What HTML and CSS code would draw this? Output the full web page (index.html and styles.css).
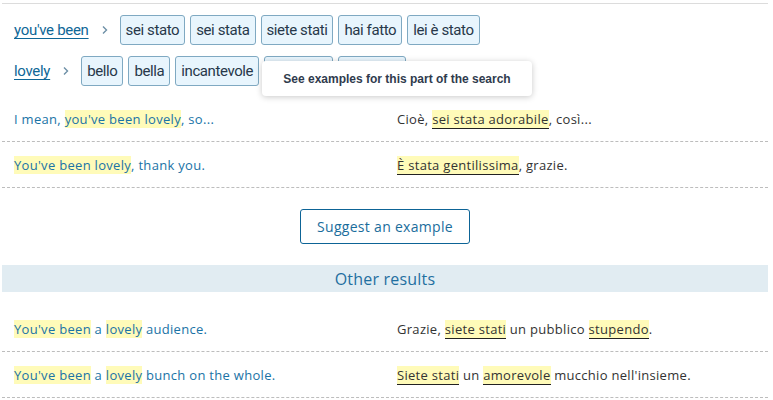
FILE: index.html
```html
<!DOCTYPE html>
<html>
<head>
<meta charset="utf-8">
<link rel="stylesheet" href="styles.css">
</head>
<body>
<div class="page">
  <div class="trans">
    <div class="trow">
      <a class="src" href="#">you've been</a>
      <span class="chev"><svg width="8" height="10" viewBox="0 0 8 10"><path d="M2 1.5 L5.5 5 L2 8.5" fill="none" stroke="#6d8fa6" stroke-width="1.4"/></svg></span>
      <span class="chip">sei stato</span>
      <span class="chip">sei stata</span>
      <span class="chip">siete stati</span>
      <span class="chip">hai fatto</span>
      <span class="chip">lei è stato</span>
    </div>
    <div class="trow">
      <a class="src" href="#">lovely</a>
      <span class="chev"><svg width="8" height="10" viewBox="0 0 8 10"><path d="M2 1.5 L5.5 5 L2 8.5" fill="none" stroke="#6d8fa6" stroke-width="1.4"/></svg></span>
      <span class="chip">bello</span>
      <span class="chip">bella</span>
      <span class="chip">incantevole</span>
      <span class="chip hidden4"></span>
      <span class="chip hidden5"></span>
      <div class="tooltip">See examples for this part of the search</div>
    </div>
  </div>

  <div class="ex">
    <div class="exsrc">I mean, <em class="hl">you've been lovely</em>, so...</div>
    <div class="extgt">Cioè, <em class="hl">sei stata adorabile</em>, così...</div>
  </div>
  <div class="ex">
    <div class="exsrc"><em class="hl">You've been lovely</em>, thank you.</div>
    <div class="extgt"><em class="hl">È stata gentilissima</em>, grazie.</div>
  </div>

  <div class="suggest">
    <button class="btn">Suggest an example</button>
  </div>

  <div class="other">Other results</div>

  <div class="ex first">
    <div class="exsrc"><em class="hl">You've been</em> a <em class="hl">lovely</em> audience.</div>
    <div class="extgt">Grazie, <em class="hl">siete stati</em> un pubblico <em class="hl">stupendo</em>.</div>
  </div>
  <div class="ex">
    <div class="exsrc"><em class="hl">You've been</em> a <em class="hl">lovely</em> bunch on the whole.</div>
    <div class="extgt"><em class="hl">Siete stati</em> un <em class="hl">amorevole</em> mucchio nell'insieme.</div>
  </div>
</div>
</body>
</html>
```

FILE: styles.css
```css
html, body {
  margin: 0;
  padding: 0;
  background: #fff;
}
.page {
  width: 766px;
  margin-left: 2px;
  margin-top: 3px;
  border-top: 1px solid #dcdcdc;
  font-family: "Open Sans", sans-serif;
}
.trans {
  padding: 11px 0 10px 12px;
  display: flex;
  flex-direction: column;
  gap: 11px;
}
.trow {
  position: relative;
  display: flex;
  align-items: center;
  height: 30px;
}
.src {
  font-family: Roboto, sans-serif;
  font-size: 15px;
  letter-spacing: -0.3px;
  color: #0f6797;
  text-decoration: underline;
  text-underline-offset: 3px;
}
.chev {
  display: inline-flex;
  margin: 0 11px 0 12px;
}
.chip {
  font-family: Roboto, sans-serif;
  font-size: 15px;
  letter-spacing: -0.4px;
  color: #27384a;
  background: #e8f5fd;
  border: 1px solid #7fa9c2;
  border-radius: 3px;
  box-sizing: border-box;
  height: 30px;
  padding: 0 5px;
  display: inline-flex;
  align-items: center;
  margin-right: 5px;
}
.hidden4 { width: 69px; }
.hidden5 { width: 68px; }
.tooltip {
  position: absolute;
  left: 248px;
  top: 5px;
  width: 270px;
  height: 35px;
  background: #fff;
  border-radius: 4px;
  box-shadow: 0 1px 6px rgba(0,0,0,0.22);
  font-family: "Liberation Sans", Arial, sans-serif;
  font-weight: bold;
  font-size: 12px;
  color: #2f3b4d;
  display: flex;
  align-items: center;
  justify-content: center;
}
.ex {
  display: grid;
  grid-template-columns: 383px 1fr;
  padding-left: 12px;
  height: 46px;
  align-items: center;
  border-bottom: 1px dashed #bdbdbd;
  font-size: 13px;
  letter-spacing: 0.3px;
  box-sizing: border-box;
}
.exsrc {
  color: #1a73a6;
}
.extgt {
  color: #333;
}
.hl {
  font-style: normal;
  background: #fffbb9;
}
.extgt .hl {
  border-bottom: 1px solid #222;
}
.suggest {
  display: flex;
  justify-content: center;
  padding: 21px 0;
}
.btn {
  font-family: "Open Sans", sans-serif;
  font-size: 14px;
  letter-spacing: 0.3px;
  color: #1a6d9c;
  background: #fff;
  border: 1px solid #0d6496;
  border-radius: 3px;
  width: 170px;
  height: 35px;
  padding: 0;
}
.other {
  background: #e1ecf2;
  height: 27px;
  display: flex;
  align-items: center;
  justify-content: center;
  color: #1f6fa0;
  font-size: 16px;
  letter-spacing: 0.2px;
}
.ex.first {
  height: 60px;
  padding-top: 14px;
}
```
